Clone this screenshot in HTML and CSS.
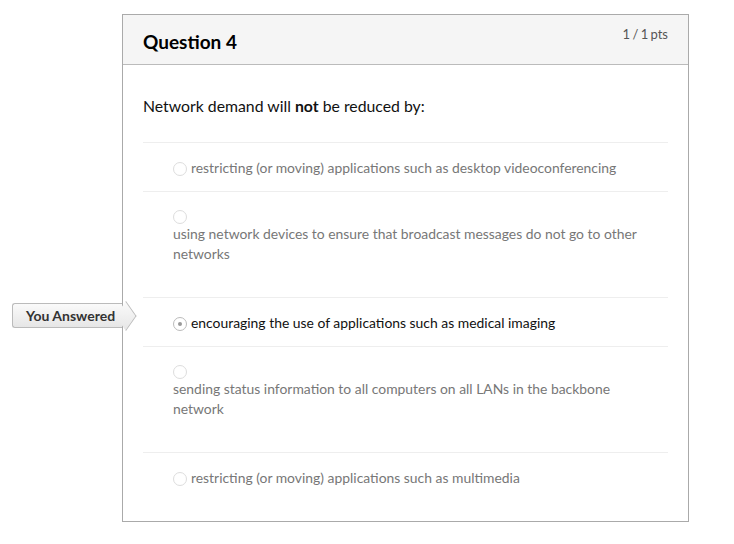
FILE: index.html
```html
<!DOCTYPE html>
<html>
<head>
<meta charset="utf-8">
<link rel="stylesheet" href="styles.css">
</head>
<body>
<div class="page">
  <div class="card">
    <div class="header">
      <h2 class="title">Question 4</h2>
      <span class="pts">1 / 1 pts</span>
    </div>
    <div class="content">
      <p class="question">Network demand will <strong>not</strong> be reduced by:</p>
      <div class="answers">
        <div class="answer">
          <span class="radio"></span><span class="text">restricting (or moving) applications such as desktop videoconferencing</span>
        </div>
        <div class="answer long">
          <span class="radio"></span>
          <div class="text">using network devices to ensure that broadcast messages do not go to other networks</div>
        </div>
        <div class="answer selected">
          <span class="badge">You Answered</span>
          <span class="radio"></span><span class="text">encouraging the use of applications such as medical imaging</span>
        </div>
        <div class="answer long">
          <span class="radio"></span>
          <div class="text">sending status information to all computers on all LANs in the backbone network</div>
        </div>
        <div class="answer">
          <span class="radio"></span><span class="text">restricting (or moving) applications such as multimedia</span>
        </div>
      </div>
    </div>
  </div>
</div>
</body>
</html>
```

FILE: styles.css
```css
* { box-sizing: border-box; }
html, body { margin: 0; padding: 0; background: #fff; }
body {
  font-family: Lato, "Liberation Sans", sans-serif;
  color: #2d3b45;
}
.page {
  padding: 14px 0 0 122px;
}
.card {
  width: 567px;
  border: 1px solid #aaa;
  position: relative;
}
.header {
  height: 50px;
  background: #f5f5f5;
  border-bottom: 1px solid #bbb;
  display: flex;
  justify-content: space-between;
  padding: 0 20px;
}
.title {
  margin: 0;
  padding-top: 15px;
  font-size: 19px;
  font-weight: 700;
  color: #000;
  line-height: 24px;
}
.pts {
  padding-top: 10px;
  font-size: 13px;
  color: #555;
  line-height: 18px;
  word-spacing: -1px;
}
.content {
  padding: 31px 20px 20px;
}
.question {
  margin: 0 0 26px;
  font-size: 15.8px;
  line-height: 20px;
  color: #111;
}
.answers {
  border-top: 1px solid #eee;
}
.answer {
  position: relative;
  border-bottom: 1px solid #eee;
  padding: 15px 0 13px 30px;
  font-size: 13.9px;
  line-height: 20px;
  color: #777;
}
.answer:last-child { border-bottom: none; }
.answer.long { padding-bottom: 33px; }
.answer.long .radio { display: block; margin-top: 3px; margin-bottom: 0; }
.answer.long .text { display: block; padding-right: 24px; }
.radio {
  display: inline-block;
  width: 14px;
  height: 14px;
  border: 1px solid #ddd;
  border-radius: 50%;
  vertical-align: -3px;
  margin-right: 4px;
  position: relative;
  background: #fff;
}
.selected { color: #111; }
.selected .radio { border-color: #bbb; }
.selected .radio::after {
  content: "";
  position: absolute;
  left: 4px;
  top: 4px;
  width: 4px;
  height: 4px;
  border-radius: 50%;
  background: #999;
}
.badge {
  position: absolute;
  left: -131px;
  top: 5px;
  width: 110px;
  height: 25px;
  border: 1px solid #bbb;
  border-right: none;
  border-radius: 3px 0 0 3px;
  background: linear-gradient(#fafafa, #e6e6e6);
  font-size: 14px;
  font-weight: 700;
  color: #333;
  line-height: 23px;
  padding-left: 13px;
}
.badge::after {
  content: "";
  position: absolute;
  right: -13px;
  top: 3px;
  width: 17px;
  height: 17px;
  transform: rotate(45deg) skew(10deg, 10deg);
  border-top: 1px solid #bbb;
  border-right: 1px solid #bbb;
  background: linear-gradient(135deg, #fafafa, #e6e6e6);
}
```
